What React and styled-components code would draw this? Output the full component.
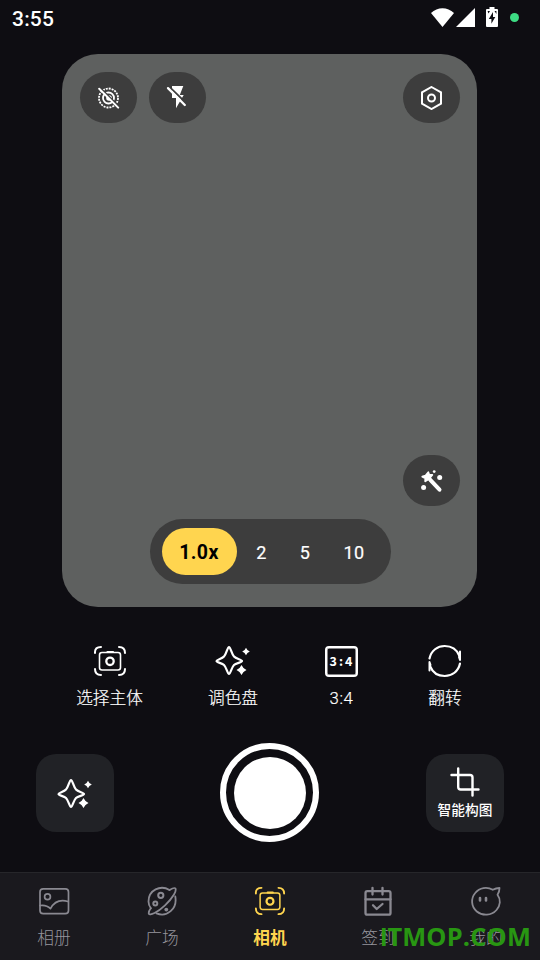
import React from "react";
import styled, { createGlobalStyle } from "styled-components";

const GlobalStyle = createGlobalStyle`
    * {
        margin: 0;
        padding: 0;
        box-sizing: border-box;
    }
    body {
        background: #0e0d12;
        font-family: Roboto, "Noto Sans CJK SC", sans-serif;
        color: #ffffff;
        overflow: hidden;
    }
    button {
        font-family: inherit;
        color: inherit;
        border: none;
        background: none;
    }
    svg {
        display: block;
        flex: none;
    }
`;

// Icons
const Icon = ({ width, height = width, box, children, stroke = 1.8 }) => (
    <svg
        width={width}
        height={height}
        viewBox={box || `0 0 ${width} ${height}`}
        fill="none"
        stroke="currentColor"
        strokeWidth={stroke}
        strokeLinecap="round"
        strokeLinejoin="round"
    >
        {children}
    </svg>
);

const WifiIcon = () => (
    <Icon width={23} height={19} stroke={0}>
        <path fill="currentColor" d="M0 5C6.500-1.300 16.500-1.300 23 5L11.500 19Z" />
    </Icon>
);

const SignalIcon = () => (
    <Icon width={19} stroke={0}>
        <path fill="currentColor" d="M19 0V19H0Z" />
    </Icon>
);

const BatteryIcon = () => (
    <Icon width={12} height={20} stroke={0}>
        <path fill="currentColor" d="M3.500 0H8.500V2H11Q12 2 12 3V19Q12 20 11 20H1Q0 20 0 19V3Q0 2 1 2H3.500Z" />
        <path fill="#0e0d12" d="M7 5L2.800 12H5.400V16.800L9.300 10H7ZM1.600 4H4L2.500 6.500ZM8.500 4H10.400V7Z" />
    </Icon>
);

const LiveOffIcon = () => (
    <Icon width={23} height={22} box="0 0 23 22" stroke={1.8}>
        <circle cx="11.500" cy="11" r="9.500" strokeDasharray="2 .98" strokeLinecap="butt" />
        <circle cx="11.500" cy="11" r="5.500" />
        <circle cx="12" cy="11" r="2.800" fill="currentColor" stroke="none" />
        <path d="M3.300 .8L22.500 20" stroke="#3d3d3d" strokeWidth="1.600" />
        <path d="M2.200 1.700L21.200 20.600" strokeWidth="2" />
    </Icon>
);

const FlashOffIcon = () => (
    <Icon width={24} box="0.500 0.500 24 24" stroke={0}>
        <path fill="currentColor" d="M6.500 .5H17.800L14.300 9.500H18.200L10.500 22.700V12.500H6.500Z" />
        <path d="M4 1.300L21 18" stroke="#3d3d3d" strokeWidth="1.800" />
        <path d="M2.500 2.600L19.300 19.500" stroke="currentColor" strokeWidth="2.300" />
    </Icon>
);

const SettingsIcon = () => (
    <Icon width={23} height={24} box="0 0 23 24" stroke={2}>
        <path d="M11.500 1L21 6.300V17.700L11.500 23L2 17.700V6.300Z" strokeLinejoin="miter" />
        <circle cx="11.500" cy="12" r="3.500" />
    </Icon>
);

const WandIcon = () => (
    <Icon width={24} stroke={0}>
        <path fill="currentColor" stroke="currentColor" strokeWidth="1.800" d="M8.300 3.300L9.200 5.700L12.300 6L10.200 8.400L11.100 11.500L8.100 10.400L5.200 12.300L5.300 9.300L2.300 7.700L5.600 6.500Z" />
        <path d="M10.500 11.200L19.500 20.700" stroke="currentColor" strokeWidth="4" />
        <circle fill="currentColor" cx="14.200" cy="2.600" r="1.400" />
        <circle fill="currentColor" cx="19.700" cy="8.500" r="2.500" />
        <circle fill="currentColor" cx="3.600" cy="18.600" r="2.500" />
    </Icon>
);

const SubjectIcon = ({ width = 34, height = 34 }) => (
    <Icon width={width} height={height} box="0 -1 34 34" stroke={2}>
        <path d="M2 8V7Q2 2 8 2M26 2Q32 2 32 8M32 24Q32 30 26 30M8 30Q2 30 2 24" />
        <rect x="6.500" y="7.500" width="21" height="17.500" rx="2.500" strokeWidth="1.600" />
        <path d="M14.500 7H20" strokeWidth="2.200" />
        <circle cx="17" cy="16.300" r="3.700" strokeWidth="2.300" />
    </Icon>
);

const SparkleIcon = () => (
    <Icon width={36} height={33} box="0.500 -0.500 36 33" stroke={2.2}>
        <path d="M14.500 2.500C16 2.500 17 9.500 19.500 12C21.500 14.500 27.500 15 27.500 16.500C27.500 18 21.500 18.500 19.500 20.500C17 23 16 29.500 14.500 29.500C13 29.500 12 23 9.500 20.500C7.500 18.500 2 18 2 16.500C2 15 7.500 14.500 9.500 12C12 9.500 13 2.500 14.500 2.500Z" />
        <path fill="currentColor" stroke="none" d="M31.500 3.200Q32.500 6 35.300 7Q32.500 8 31.500 10.800Q30.500 8 27.700 7Q30.500 6 31.500 3.200Z" />
        <path fill="currentColor" stroke="none" d="M27 20.500Q28.500 24 32 25.500Q28.500 27 27 30.500Q25.500 27 22 25.500Q25.500 24 27 20.500Z" />
        <path fill="currentColor" stroke="none" d="M27 22L30.500 25.500L27 29L23.500 25.500Z" />
    </Icon>
);

const FlipIcon = () => (
    <Icon width={34} height={34} stroke={2.2}>
        <path d="M1.500 14.500C3.200 6.500 9.500 2 16.700 2C23.200 2 28.700 5.500 31.200 11.500M32 19.500C30.300 27.500 24 32 16.700 32C10.200 32 4.700 28.500 2.200 22.500" />
        <path d="M32 7.500V16L31 13M1.500 26.500V18L2.500 21" strokeWidth="2" />
    </Icon>
);

const CropIcon = () => (
    <Icon width={30} stroke={2.400}>
        <path d="M8.200 1.500V20Q8.200 22.500 10.700 22.500H28.500M1.500 8H20Q22.500 8 22.500 10.500V28.500" />
    </Icon>
);

const AlbumIcon = () => (
    <Icon width={32} height={28} stroke={1.700}>
        <rect x="2" y="1.900" width="28.500" height="24.700" rx="3.200" />
        <circle cx="9.500" cy="9.800" r="2.900" />
        <path d="M2 18.500Q8.500 17.500 12.500 21.700C16 15 22 12.300 30 14.500" />
    </Icon>
);

const PlanetIcon = () => (
    <Icon width={32} height={30} stroke={1.8}>
        <path d="M23.500 4C14.500 -1.500 2.500 4 2.500 15.500Q2.600 19.500 4.800 22.300M10.500 27.400C21 31.500 31.500 23 29.300 10.500" />
        <path d="M23.500 4Q28.500 1 29.500 2.500Q30.300 4.500 28 8.500C23.500 16 15 24 8.500 27Q3.500 29.300 2.800 27.700Q2.400 25.500 4.800 22.300" />
        <circle cx="14.800" cy="9.300" r="2.600" strokeWidth="2" />
        <circle cx="9.300" cy="17.400" r="2" strokeWidth="2" />
        <circle cx="20.300" cy="23.600" r="1.900" fill="currentColor" stroke="none" />
    </Icon>
);

const CheckInIcon = () => (
    <Icon width={30} height={30} stroke={2.300}>
        <rect x="2.500" y="5.200" width="25" height="23.500" rx="1.800" />
        <path d="M2.500 13.300H27.500M9.500 1.800V8.500M19.500 1.800V8.500M10 19.300L13.700 23L19.500 18" />
    </Icon>
);

const ProfileIcon = () => (
    <Icon width={32} height={30} stroke={1.800}>
        <path d="M27.500 8.800C31 13.500 30.500 19.500 26.500 24C21.500 29.800 12.500 30.200 6.800 25.500C1 20.500 .7 12.500 5.200 7C9.500 1.500 17 .3 22.800 3.800Q26 2 29.500 2Q29.500 6 27.500 8.800Z" />
        <path d="M10 12V14.500M16 12V14.500" strokeWidth="2.600" />
    </Icon>
);

const CameraPage = () => {
    return (
        <Page>
            <StatusBar>
                <Clock>3:55</Clock>
                <StatusIcons>
                    <WifiIcon />
                    <SignalIcon />
                    <BatteryIcon />
                    <PrivacyDot />
                </StatusIcons>
            </StatusBar>

            <Viewfinder>
                <TopControls>
                    <RoundButton aria-label="live"><LiveOffIcon /></RoundButton>
                    <RoundButton aria-label="flash"><FlashOffIcon /></RoundButton>
                    <RoundButton aria-label="settings" $end><SettingsIcon /></RoundButton>
                </TopControls>
                <BottomControls>
                    <RoundButton aria-label="effects"><WandIcon /></RoundButton>
                    <ZoomBar>
                        <ZoomActive>1.0x</ZoomActive>
                        <ZoomLevel $width={50}>2</ZoomLevel>
                        <ZoomLevel $width={37}>5</ZoomLevel>
                        <ZoomLevel $width={61}>10</ZoomLevel>
                    </ZoomBar>
                </BottomControls>
            </Viewfinder>

            <Tools>
                <Tool $width={67}><SubjectIcon />选择主体</Tool>
                <Tool $width={50}><SparkleIcon />调色盘</Tool>
                <Tool $width={34}><RatioBadge>3:4</RatioBadge><Ratio>3:4</Ratio></Tool>
                <Tool $width={34}><FlipIcon />翻转</Tool>
            </Tools>

            <ShutterRow>
                <SideButton><SparkleIcon /></SideButton>
                <Shutter aria-label="shutter"><ShutterCore /></Shutter>
                <SideButton><CropIcon />智能构图</SideButton>
            </ShutterRow>

            <TabBar>
                <Tab><TabIcon><AlbumIcon /></TabIcon>相册</Tab>
                <Tab><TabIcon><PlanetIcon /></TabIcon>广场</Tab>
                <Tab $active><TabIcon><SubjectIcon width={32} height={32} /></TabIcon>相机</Tab>
                <Tab><TabIcon><CheckInIcon /></TabIcon>签到</Tab>
                <Tab><TabIcon><ProfileIcon /></TabIcon>我的</Tab>
                <Watermark><span>I</span>TMOP.COM</Watermark>
            </TabBar>
        </Page>
    );
};

const Page = styled.div`
    display: flex;
    flex-direction: column;
    width: 540px;
    height: 960px;
    background: #0e0d12;
`;

const StatusBar = styled.header`
    display: flex;
    justify-content: space-between;
    height: 54px;
    padding: 7px 21px 0 12px;
`;

const Clock = styled.span`
    font-size: 21px;
    font-weight: 500;
    line-height: 24px;
    letter-spacing: 0.2px;
`;

const StatusIcons = styled.div`
    display: flex;
    align-items: center;
    height: 20px;
    svg:nth-child(2){
        margin-left: 2px;
    }
    svg:nth-child(3){
        margin-left: 11px;
    }
`;

const PrivacyDot = styled.i`
    width: 9px;
    height: 9px;
    margin-left: 12px;
    border-radius: 50%;
    background: #3ddc84;
`;

const Viewfinder = styled.main`
    display: flex;
    flex-direction: column;
    justify-content: space-between;
    width: 415px;
    height: 553px;
    margin-left: 62px;
    padding: 18px 17px 23px 18px;
    border-radius: 36px;
    background: #5e605f;
`;

const TopControls = styled.div`
    display: flex;
    gap: 12px;
`;

const RoundButton = styled.button`
    display: flex;
    align-items: center;
    justify-content: center;
    width: 57px;
    height: 51px;
    border-radius: 26px;
    background: #3d3d3d;
    margin-left: ${({ $end }) => ($end ? "auto" : "0")};
`;

const BottomControls = styled.div`
    display: flex;
    flex-direction: column;
    align-items: flex-end;
    gap: 13px;
`;

const ZoomBar = styled.div`
    display: flex;
    align-items: center;
    align-self: center;
    width: 241px;
    height: 65px;
    padding-left: 12px;
    border-radius: 33px;
    background: #3d3d3d;
`;

const ZoomActive = styled.button`
    width: 75px;
    height: 47px;
    padding-top: 1px;
    border-radius: 24px;
    background: #ffd54f;
    color: #000000;
    font-size: 19.5px;
    font-weight: 700;
    letter-spacing: 0.4px;
`;

const ZoomLevel = styled.button`
    width: ${({ $width }) => $width}px;
    font-size: 18px;
    font-weight: 400;
    letter-spacing: 0.3px;
    padding-top: 2px;
    -webkit-text-stroke: 0.2px currentColor;
`;

const Tools = styled.div`
    display: flex;
    justify-content: space-between;
    padding: 37px 78px 0 76px;
    height: 135px;
`;

const Tool = styled.button`
    display: flex;
    flex-direction: column;
    align-items: center;
    width: ${({ $width }) => $width}px;
    height: 67px;
    font-size: 16.7px;
    line-height: 24px;
    font-weight: 300;
    white-space: nowrap;
    justify-content: space-between;
    -webkit-text-stroke: 0.2px currentColor;
    &:nth-child(2){
        margin-left: -4px;
    }
    &:nth-child(3){
        margin-left: -3px;
        margin-right: 1px;
    }
`;

const RatioBadge = styled.span`
    display: flex;
    align-items: center;
    justify-content: center;
    width: 33px;
    height: 31px;
    margin-top: 2px;
    padding: 0 0 1px 2px;
    border: 2px solid #ffffff;
    border-radius: 4px;
    box-shadow: inset 0 0 0 0.5px #ffffff;
    font-family: "Noto Sans CJK SC", sans-serif;
    font-size: 12.5px;
    font-weight: 700;
    letter-spacing: 2px;
    -webkit-text-stroke: 0;
`;

const Ratio = styled.span`
    padding-left: 1px;
    letter-spacing: 0.6px;
`;

const ShutterRow = styled.div`
    display: flex;
    align-items: center;
    justify-content: space-between;
    height: 101px;
    padding: 0 36px;
`;

const SideButton = styled.button`
    display: flex;
    flex-direction: column;
    align-items: center;
    justify-content: center;
    width: 78px;
    height: 78px;
    padding-top: 1px;
    border-radius: 20px;
    background: #212226;
    font-size: 13.7px;
    font-weight: 500;
    line-height: 20px;
    gap: 3px;
`;

const Shutter = styled.button`
    display: flex;
    align-items: center;
    justify-content: center;
    width: 99px;
    height: 99px;
    margin-right: 1px;
    border: 6px solid #ffffff;
    border-radius: 50%;
`;

const ShutterCore = styled.i`
    width: 72px;
    height: 72px;
    border-radius: 50%;
    background: #ffffff;
`;

const TabBar = styled.nav`
    position: relative;
    display: grid;
    grid-template-columns: repeat(5, 1fr);
    height: 88px;
    margin-top: 29px;
    border-top: 1px solid #26262a;
    background: #1a191e;
`;

const Tab = styled.button`
    display: flex;
    flex-direction: column;
    align-items: center;
    padding-top: 12px;
    gap: 10px;
    color: ${({ $active }) => ($active ? "#ffd54f" : "#96959d")};
    font-size: 16.7px;
    font-weight: ${({ $active }) => ($active ? 700 : 300)};
    line-height: 24px;
    svg {
        color: ${({ $active }) => ($active ? "#ffd54f" : "#8a8991")};
    }
`;

const TabIcon = styled.span`
    display: flex;
    align-items: center;
    height: 32px;
`;

// Source label printed over the last two tabs
const Watermark = styled.span`
    position: absolute;
    right: 9px;
    bottom: 8px;
    font-family: "Open Sans", sans-serif;
    font-size: 25.4px;
    font-weight: 700;
    line-height: 30px;
    letter-spacing: 0.15px;
    color: #289612;
    span{
        font-family: "Liberation Sans", sans-serif;
    }
`;

const App = () => (
    <>
        <GlobalStyle />
        <CameraPage />
    </>
);

export default App;
